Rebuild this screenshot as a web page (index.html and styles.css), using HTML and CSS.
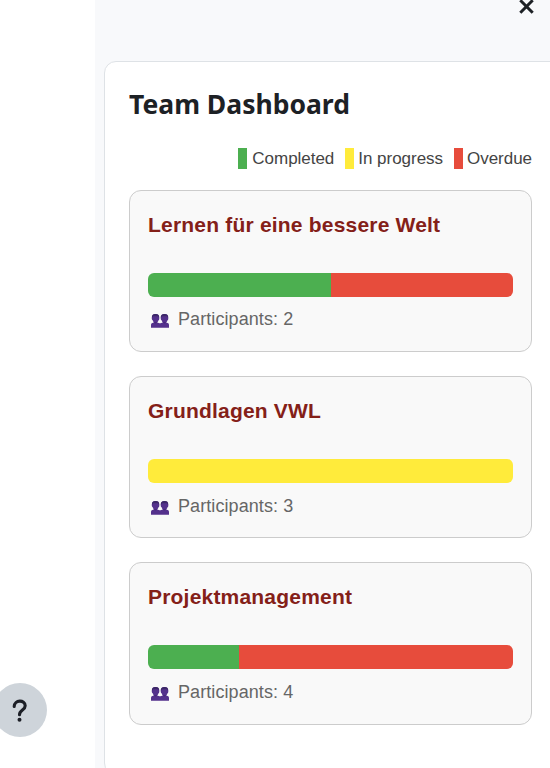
FILE: index.html
```html
<!DOCTYPE html>
<html lang="en">
<head>
<meta charset="utf-8">
<title>Team Dashboard</title>
<link rel="stylesheet" href="styles.css">
</head>
<body>
<svg class="symbols" aria-hidden="true">
  <symbol id="people" viewBox="0 0 19 15">
    <path d="M5 0C2.2 0 1.2 1.5 1.4 3.8C1 5 1.6 6 2.2 6.3C2.5 7.4 3 8 3.3 8.4L1.2 9.2Q.5 9.7 .5 11V13.8H18.5V11Q18.5 9.7 17.8 9.2L15.7 8.4C16.3 8 16.7 7.4 17 6.3C17.7 6 18 5 17.7 3.8C17.9 1.5 17 0 14 0C11.2 0 10.1 1.5 10.3 3.8C10 5 10.5 6 11.1 6.3C11.4 7.4 11.8 8 12.3 8.4L10 9.2H9L6.7 8.4C7.3 8 7.7 7.4 8 6.3C8.7 6 9 5 8.7 3.8C8.9 1.5 8 0 5 0Z" fill="#54318c"/>
    <path d="M1.4 4C1.2 1.2 2.3 0 5 0S8.9 1.2 8.7 4L7.6 2.3H2.6ZM10.3 4C10.1 1.2 11.4 0 14 0S17.9 1.2 17.7 4L16.5 2.3H11.6Z" fill="#3c2867"/>
    <path d="M3.4 8.2H6.6L5 9.5ZM12.4 8.2H15.6L14 9.5Z" fill="#432376"/>
  </symbol>
</svg>
<div class="page">
  <aside class="sidebar">
    <button class="help" aria-label="Help">
      <svg width="54" height="54" viewBox="0 0 54 54"><path d="M21.2 23.5C21.2 16.5 32.2 16.5 32.2 22.8C32.2 27.2 26.5 27 26.5 31.8" fill="none" stroke="#1c1f26" stroke-width="3.1" stroke-linecap="round"/><circle cx="26.5" cy="36.7" r="2" fill="#1c1f26"/></svg>
    </button>
  </aside>
  <main class="content">
    <header class="topbar">
      <svg class="close" width="16" height="16" viewBox="0 0 16 16"><path d="M1.3 2.3L13.7 14.7M13.7 2.3L1.3 14.7" stroke="#1d2125" stroke-width="3"/></svg>
    </header>
    <section class="panel">
      <h1>Team Dashboard</h1>
      <div class="legend">
        <span class="key completed"><i class="swatch green"></i><span class="label">Completed</span></span>
        <span class="key"><i class="swatch yellow"></i><span class="label">In progress</span></span>
        <span class="key"><i class="swatch red"></i><span class="label">Overdue</span></span>
      </div>
      <div class="cards">
        <article class="card">
          <h2>Lernen für eine bessere Welt</h2>
          <div class="bar"><div class="green" style="width:50%"></div><div class="red" style="width:50%"></div></div>
          <p><svg class="people"><use href="#people"/></svg>Participants: 2</p>
        </article>
        <article class="card">
          <h2>Grundlagen VWL</h2>
          <div class="bar"><div class="yellow" style="width:100%"></div></div>
          <p><svg class="people"><use href="#people"/></svg>Participants: 3</p>
        </article>
        <article class="card">
          <h2>Projektmanagement</h2>
          <div class="bar"><div class="green" style="width:25%"></div><div class="red" style="width:75%"></div></div>
          <p><svg class="people"><use href="#people"/></svg>Participants: 4</p>
        </article>
      </div>
    </section>
  </main>
</div>
</body>
</html>
```
FILE: styles.css
```css
* { box-sizing: border-box; }
body { margin: 0; background: #fff; font-family: "Liberation Sans", Arial, sans-serif; }
.symbols { display: none; }
.page { display: flex; height: 768px; overflow: hidden; }
.sidebar { flex: 0 0 95px; display: flex; align-items: flex-end; padding-bottom: 31px; }
.help { width: 54px; height: 54px; margin: 0 0 0 -7px; padding: 0; border: 0; border-radius: 50%; background: #ced4da; }
.help svg { display: block; }
.content { flex: 1; min-width: 0; background: #f8f9fb; }
.topbar { height: 61px; display: flex; justify-content: flex-end; padding-right: 15px; }
.close { margin-top: -2px; }
.panel { width: 458px; height: 714px; margin-left: 9px; padding: 24px 24px 0; border: 1px solid #dee2e6; border-radius: 12px; background: #fff; }
h1 { margin: 0; font: 700 26.5px/36px "Noto Sans", "Open Sans", sans-serif; color: #1d2125; white-space: nowrap; }
.legend { display: flex; justify-content: flex-end; width: 403px; height: 21px; margin-top: 26px; gap: 11px; font-size: 17px; line-height: 22px; letter-spacing: -0.03px; color: #444; }
.key { display: flex; gap: 4px; white-space: nowrap; }
.completed { gap: 5px; }
.swatch { width: 9px; height: 21px; }
.green { background: #4caf50; }
.yellow { background: #ffeb3b; }
.red { background: #e74c3c; }
.cards { display: flex; flex-direction: column; gap: 24px; width: 403px; margin-top: 21px; }
.card { height: 162px; padding: 18px; border: 1px solid #ccc; border-radius: 12px; background: #f9f9f9; }
.card:last-child { height: 163px; }
h2 { margin: 3px 0 35px; font-size: 21px; line-height: 26px; letter-spacing: 0.2px; color: #842018; white-space: nowrap; }
.bar { display: flex; height: 24px; border-radius: 6px; overflow: hidden; }
.card p { display: flex; align-items: center; gap: 8px; margin: 10px 0 0 2px; font-size: 18px; line-height: 24px; letter-spacing: 0.08px; color: #666; }
.card + .card p { margin-top: 11px; }
.people { width: 20px; height: 15px; margin-top: 4px; }
```
